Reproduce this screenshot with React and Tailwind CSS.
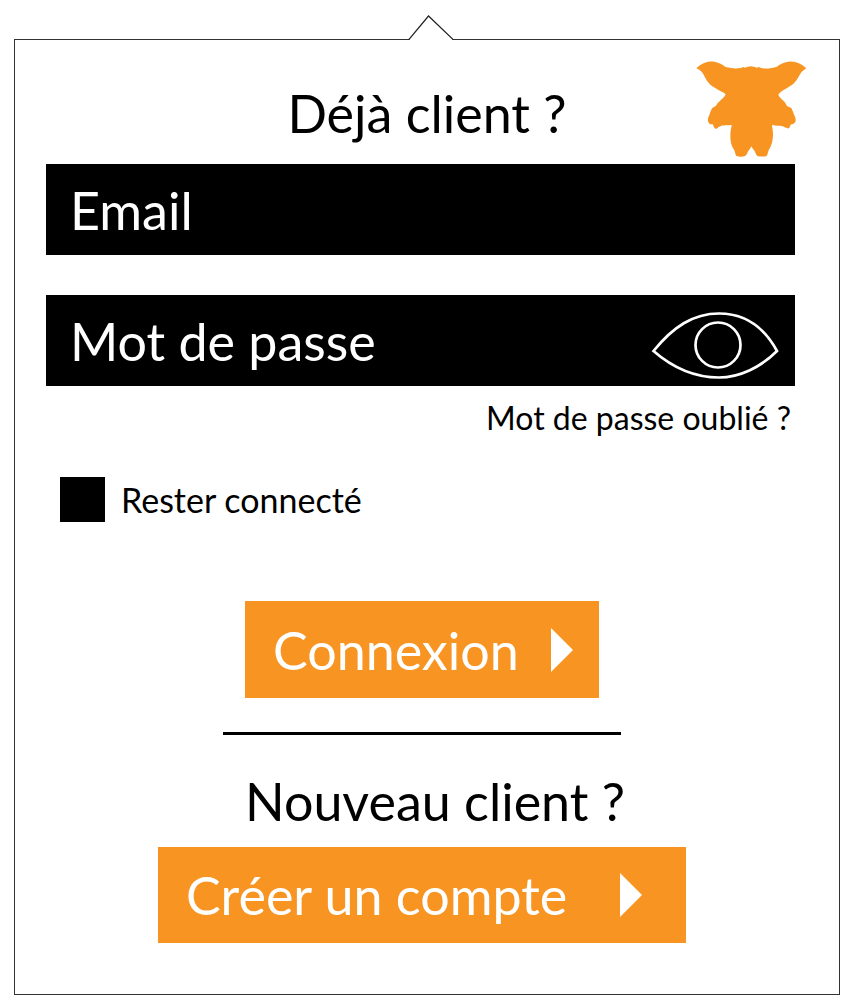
import { useState } from "react";

function Mascot() {
  return (
    <svg viewBox="33 33 330 288" className="h-24 w-[110px]" fill="#f89522" aria-hidden="true">
      <path d="M34 55C50 38 70 32 88 35C104 38 114 44 122 51C138 55 152 57 168 54L174 51L181 53C186 50 192 51 198 49C204 51 209 50 214 53L222 51L228 54C244 57 260 55 276 50C284 43 294 37 310 35C330 32 348 40 364 55C352 62 348 68 342 78C333 94 327 102 314 109C304 117 290 121 280 134C282 141 290 147 297 154C303 160 303 165 307 169L319 174L324 185C325 193 333 200 332 211C332 218 328 219 325 222C318 221 317 224 315 229C313 236 309 237 305 233C300 235 298 230 292 229C287 225 284 229 278 227C272 227 266 227 261 225C261 232 264 238 264 253C264 272 260 284 255 294C250 300 249 308 246 317C238 320 226 321 217 318C212 313 211 304 206 299C203 296 201 292 199 289C197 293 196 296 192 300C188 305 186 313 182 317C174 321 161 321 153 317C150 309 149 300 144 295C139 286 136 274 136 256C136 241 139 234 140 225C133 226 127 226 121 226C113 228 112 225 107 229C104 231 101 229 98 234C94 238 89 236 86 230C85 222 82 222 75 223C70 218 68 214 69 205C71 199 74 194 76 186L81 175L92 168C96 164 98 158 104 154C110 147 119 142 122 133C114 125 101 122 91 114C76 107 69 98 61 84C54 69 47 60 34 55Z" />
    </svg>
  );
}

function Arrow() {
  return (
    <svg viewBox="0 0 22 44" className="h-11 w-[22px] shrink-0" fill="white" aria-hidden="true">
      <path d="M0 0L22 22L0 44Z" />
    </svg>
  );
}

function Field({ id, label, type, children }) {
  return (
    <div className="flex h-[91px] items-center bg-black pr-4">
      <input
        id={id}
        type={type}
        aria-label={label}
        placeholder={label}
        className="h-full min-w-0 flex-1 bg-transparent pl-6 text-[52px] text-white outline-none placeholder:text-white placeholder:opacity-100"
      />
      {children}
    </div>
  );
}

export default function App() {
  const [shown, setShown] = useState(false);

  return (
    <main className="bg-white pt-[39px] pr-[10px] pb-3 pl-[14px] font-['Lato',sans-serif] text-black">
      <form
        className="relative border border-[#333] pb-[51px]"
        onSubmit={(event) => event.preventDefault()}
      >
        <svg
          viewBox="0 0 46 26"
          className="absolute -top-[25px] left-1/2 -ml-[19px] h-[26px] w-[46px]"
          aria-hidden="true"
        >
          <path d="M1 25L20 1L45 25V26H1Z" fill="white" />
          <path d="M0 24.5H1L20.5 1L45 24.5H46" fill="none" stroke="#222" strokeWidth="1.2" />
        </svg>

        <header className="grid h-[124px] grid-cols-[1fr_auto_1fr] items-start pt-[21px]">
          <h1 className="col-start-2 pt-4 text-[52px] leading-[72px]">Déjà client ?</h1>
          <div className="mr-[33px] justify-self-end">
            <Mascot />
          </div>
        </header>

        <div className="flex flex-col gap-10 pr-11 pl-[31px]">
          <Field id="email" label="Email" type="email" />
          <Field id="password" label="Mot de passe" type={shown ? "text" : "password"}>
            <button
              type="button"
              aria-label="Afficher le mot de passe"
              aria-pressed={shown}
              onClick={() => setShown(!shown)}
              className="mt-2"
            >
              <svg
                viewBox="0 0 128 70"
                className="h-[70px] w-32"
                fill="none"
                stroke="white"
                strokeWidth="2.7"
                aria-hidden="true"
              >
                <path d="M2.5 41C22 17 42 3.5 68 3.5C93 3.5 113 17 126 41C110 57 89 67.5 68 67.5C45 67.5 22 58 2.5 41Z" />
                <circle cx="67" cy="35" r="22.5" />
              </svg>
            </button>
          </Field>
        </div>

        <div className="flex justify-end pt-3 pr-12">
          <a href="#oublie" className="text-[32px] leading-10">
            Mot de passe oublié ?
          </a>
        </div>

        <div className="flex items-center gap-4 pt-[39px] pl-[45px]">
          <input
            id="remember"
            type="checkbox"
            className="size-[45px] appearance-none bg-black checked:border-8 checked:border-black checked:bg-white"
          />
          <label htmlFor="remember" className="text-[34px] leading-[45px]">
            Rester connecté
          </label>
        </div>

        <div className="flex flex-col items-center pt-[79px] pr-[10px]">
          <button
            type="submit"
            className="flex h-[97px] w-[354px] items-center justify-between bg-[#f89522] pr-[26px] pl-7 text-[52px] whitespace-nowrap text-white"
          >
            Connexion
            <Arrow />
          </button>
          <hr className="mt-[34px] w-[398px] border-t-[3px] border-black" />
        </div>

        <h2 className="pt-7 pb-2 pl-4 text-center text-[52px] leading-[76px]">Nouveau client ?</h2>

        <div className="flex justify-center pr-[10px]">
          <button
            type="button"
            className="flex h-24 w-[528px] items-center justify-between bg-[#f89522] pr-11 pl-7 text-[52px] whitespace-nowrap text-white"
          >
            Créer un compte
            <Arrow />
          </button>
        </div>
      </form>
    </main>
  );
}
